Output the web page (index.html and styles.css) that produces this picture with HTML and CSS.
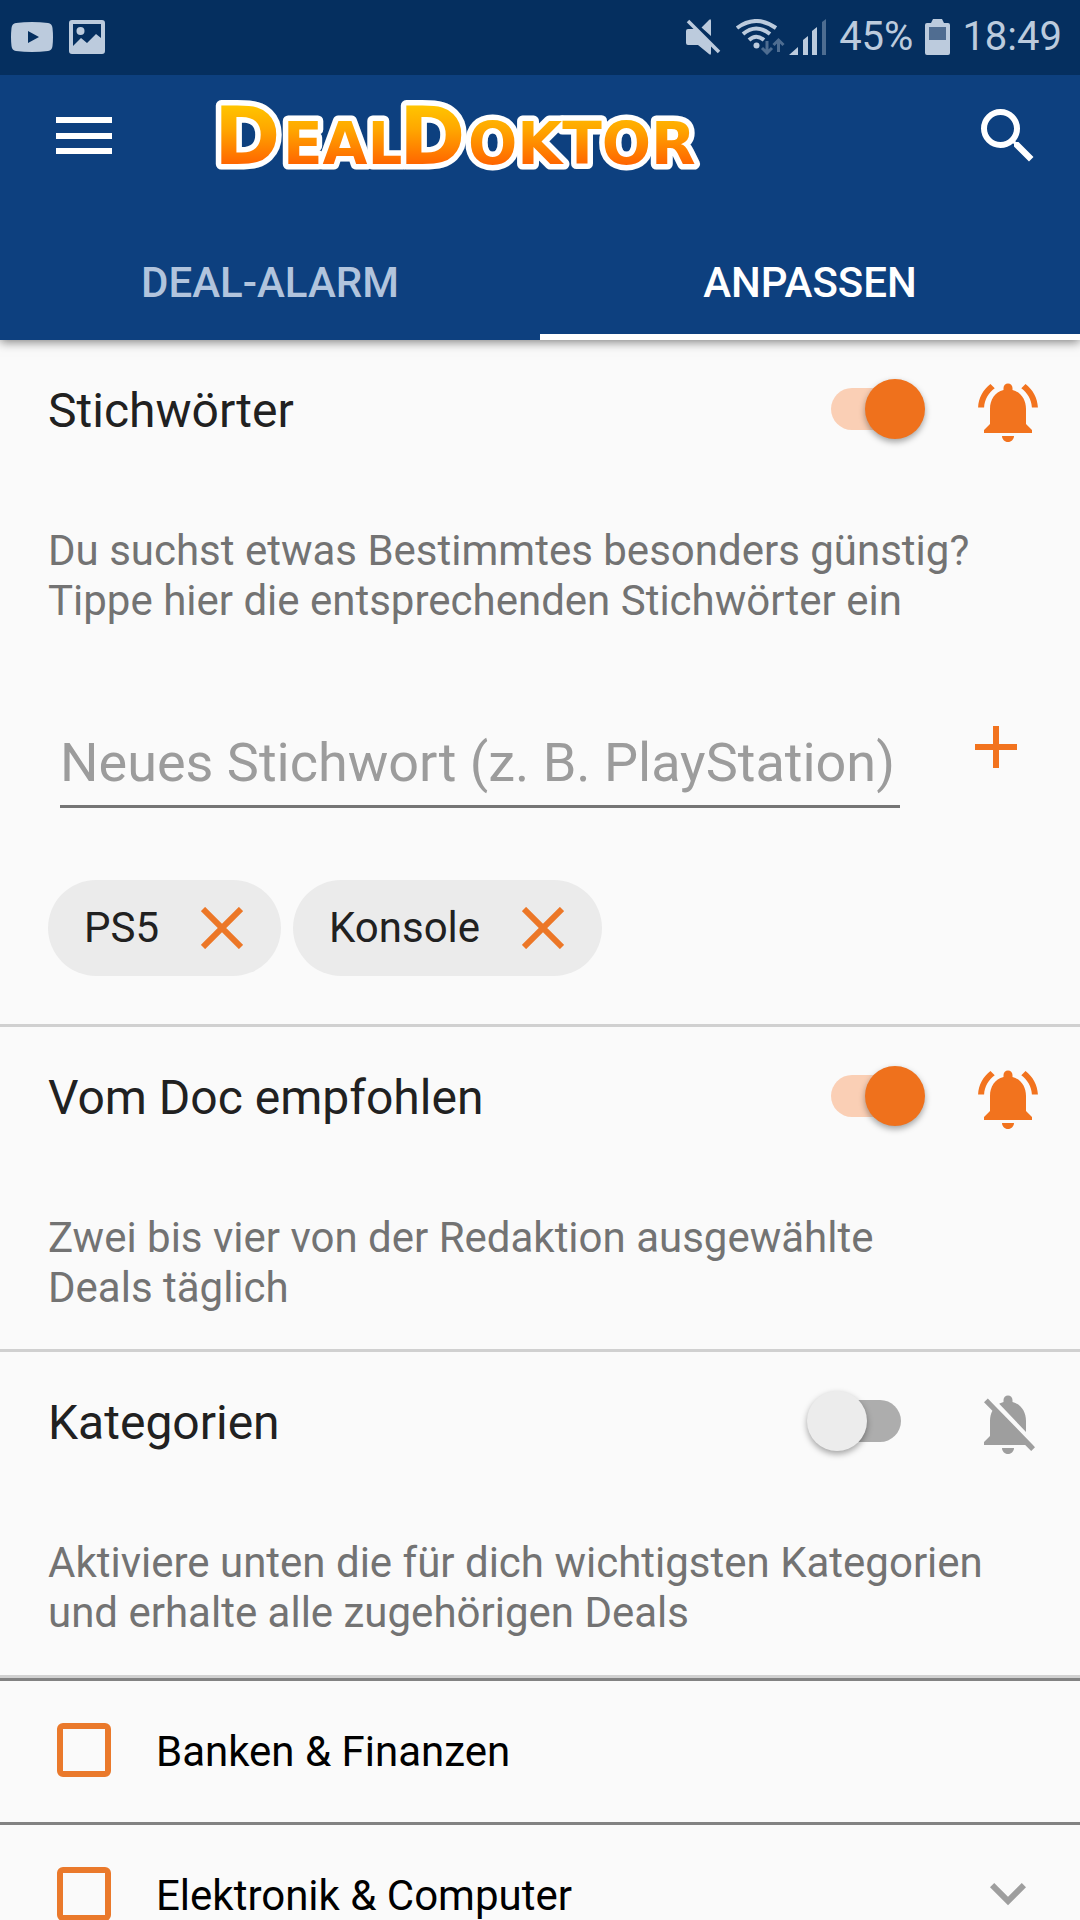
FILE: index.html
```html
<!DOCTYPE html>
<html lang="de">
<head>
<meta charset="utf-8">
<meta name="viewport" content="width=device-width, initial-scale=1">
<title>DealDoktor – Deal-Alarm anpassen</title>
<link rel="stylesheet" href="styles.css">
</head>
<body>
<div class="app">
  <div class="status">
    <div class="status-group status-left">
      <svg width="42" height="30" viewBox="0 0 42 30" aria-hidden="true"><path fill="currentColor" fill-rule="evenodd" d="M5 1Q21-1 37 1Q41 1.500 41.500 6Q42.500 15 41.500 24Q41 28.500 37 29Q21 31 5 29Q1 28.500 .5 24Q-.5 15 .5 6Q1 1.500 5 1ZM17 9v12l11-6z"/></svg>
      <svg width="36" height="34" viewBox="0 0 36 34" aria-hidden="true"><path fill="currentColor" fill-rule="evenodd" d="M3 0h30q3 0 3 3v28q0 3-3 3H3q-3 0-3-3V3q0-3 3-3ZM4 4v22l8-8 6 5 9-9 5 4V4z"/><circle cx="11.500" cy="11" r="4" fill="currentColor"/></svg>
    </div>
    <div class="status-group">
      <svg width="37" height="36" viewBox="0 0 37 36" aria-hidden="true"><path fill="currentColor" d="M2 10h7l16 16v8q0 3-2 1L12 26H2q-2 0-2-2V12q0-2 2-2zM25 2v15L15.500 8.500 23 1q2-2 2 1z"/><path stroke="currentColor" stroke-width="3.500" d="M2 2l31 31"/></svg>
      <svg width="92" height="36" viewBox="0 0 92 36" aria-hidden="true">
        <g fill="none" stroke="currentColor" stroke-width="4"><path d="M2 9Q21-5 41 9"/><path d="M8 15Q21 4 35 15"/><path d="M14 21Q21 14.500 29 21"/></g>
        <circle cx="21.500" cy="26.500" r="3" fill="currentColor"/>
        <g fill="none" stroke="currentColor" stroke-width="3" opacity=".4"><path d="M32 22v12M27 29l5 5 5-5M43.500 33V21M38.500 26l5-5 5 5"/></g>
        <path fill="currentColor" d="M54 36l9-8v8zM68 36V21l5-4v19zM77 36V12l5-4v28z"/><path fill="currentColor" opacity=".4" d="M87 36V3l4-3v36z"/>
      </svg>
      <span>45%</span>
      <svg width="25" height="36" viewBox="0 0 25 36" aria-hidden="true"><path fill="currentColor" d="M8 0h9l2 4h4q2 0 2 2v28q0 2-2 2H2q-2 0-2-2V6q0-2 2-2h4z"/><path fill="#506d91" d="M4 8h17v13H4z"/></svg>
      <time datetime="18:49">18:49</time>
    </div>
  </div>

  <header class="header">
    <div class="toolbar">
      <button class="icon-button" type="button" aria-label="Menü"><svg width="72" height="72" viewBox="0 0 72 72"><path fill="currentColor" d="M8 17h56v6H8zM8 33h56v6H8zM8 48h56v6H8z"/></svg></button>
      <svg class="logo" width="510" height="120" viewBox="210 76 510 120" role="img" aria-label="DealDoktor">
        <defs><linearGradient id="fire" gradientUnits="userSpaceOnUse" x1="0" y1="106" x2="0" y2="164"><stop offset="0" stop-color="#ffc400"/><stop offset=".4" stop-color="#ffa700"/><stop offset="1" stop-color="#ff6600"/></linearGradient></defs>
        <text class="logo-text" y="164"><tspan class="logo-cap" x="214">D</tspan><tspan x="283">EAL</tspan><tspan class="logo-cap" x="399">D</tspan><tspan x="468">OKTOR</tspan></text>
      </svg>
      <button class="icon-button" type="button" aria-label="Suche"><svg width="72" height="72" viewBox="0 0 24 24"><path fill="currentColor" d="M15.500 14h-.79l-.28-.27A6.471 6.471 0 0 0 16 9.500 6.500 6.500 0 1 0 9.500 16c1.610 0 3.090-.59 4.230-1.570l.27.28v.79l5 4.990L20.490 19l-4.990-5zm-6 0C7.010 14 5 11.990 5 9.500S7.010 5 9.500 5 14 7.010 14 9.500 11.990 14 9.500 14z"/></svg></button>
    </div>
    <div class="tabs" role="tablist">
      <button class="tab" type="button" role="tab" aria-selected="false">DEAL-ALARM</button>
      <button class="tab" type="button" role="tab" aria-selected="true">ANPASSEN</button>
    </div>
  </header>

  <main class="content">
    <section class="section">
      <div class="section-head">
        <h2><label for="sw-keywords">Stichwörter</label></h2>
        <input class="switch" type="checkbox" id="sw-keywords" checked>
        <button class="icon-button bell bell-on" type="button" aria-label="Benachrichtigung aus"><svg width="72" height="72" viewBox="0 0 24 24"><path fill="currentColor" d="M7.580 4.080L6.150 2.650C3.750 4.480 2.170 7.300 2.030 10.500h2c.15-2.650 1.510-4.970 3.550-6.420zm12.390 6.420h2c-.15-3.200-1.730-6.020-4.120-7.850l-1.420 1.430c2.020 1.450 3.390 3.770 3.540 6.420zM18 11c0-3.070-1.640-5.640-4.500-6.320V4c0-.83-.67-1.500-1.500-1.500s-1.500.67-1.500 1.500v.68C7.630 5.360 6 7.920 6 11v5l-2 2v1h16v-1l-2-2zM12 22c1.100 0 2-.9 2-2h-4c0 1.100.9 2 2 2z"/></svg></button>
      </div>
      <p class="description">Du suchst etwas Bestimmtes besonders günstig?<br>Tippe hier die entsprechenden Stichwörter ein</p>
      <form class="keyword-form">
        <input class="keyword-input" type="text" aria-label="Neues Stichwort" placeholder="Neues Stichwort (z. B. PlayStation)">
        <button class="icon-button bell-on" type="button" aria-label="Hinzufügen"><svg width="72" height="72" viewBox="0 0 24 24"><path fill="currentColor" d="M19 13h-6v6h-2v-6H5v-2h6V5h2v6h6z"/></svg></button>
      </form>
      <ul class="chips">
        <li class="chip">PS5<button class="chip-remove" type="button" aria-label="PS5 entfernen"><svg width="42" height="42" viewBox="0 0 42 42"><path stroke="currentColor" stroke-width="6" d="M2 2l38 38M40 2L2 40"/></svg></button></li>
        <li class="chip">Konsole<button class="chip-remove" type="button" aria-label="Konsole entfernen"><svg width="42" height="42" viewBox="0 0 42 42"><path stroke="currentColor" stroke-width="6" d="M2 2l38 38M40 2L2 40"/></svg></button></li>
      </ul>
    </section>

    <section class="section">
      <div class="section-head">
        <h2><label for="sw-doc">Vom Doc empfohlen</label></h2>
        <input class="switch" type="checkbox" id="sw-doc" checked>
        <button class="icon-button bell bell-on" type="button" aria-label="Benachrichtigung aus"><svg width="72" height="72" viewBox="0 0 24 24"><path fill="currentColor" d="M7.580 4.080L6.150 2.650C3.750 4.480 2.170 7.300 2.030 10.500h2c.15-2.650 1.510-4.970 3.550-6.420zm12.390 6.420h2c-.15-3.200-1.730-6.020-4.120-7.850l-1.420 1.430c2.020 1.450 3.390 3.770 3.540 6.420zM18 11c0-3.070-1.640-5.640-4.500-6.320V4c0-.83-.67-1.500-1.500-1.500s-1.500.67-1.500 1.500v.68C7.630 5.360 6 7.920 6 11v5l-2 2v1h16v-1l-2-2zM12 22c1.100 0 2-.9 2-2h-4c0 1.100.9 2 2 2z"/></svg></button>
      </div>
      <p class="description">Zwei bis vier von der Redaktion ausgewählte<br>Deals täglich</p>
    </section>

    <section class="section">
      <div class="section-head">
        <h2><label for="sw-categories">Kategorien</label></h2>
        <input class="switch" type="checkbox" id="sw-categories">
        <button class="icon-button bell bell-off" type="button" aria-label="Benachrichtigung an"><svg width="72" height="72" viewBox="0 0 24 24"><path fill="currentColor" d="M20 18.690L7.840 6.140 5.270 3.490 4 4.760l2.800 2.800v.01c-.52.99-.8 2.160-.8 3.420v5l-2 2v1h13.730l2 2L21 19.720l-1-1.030zM12 22c1.110 0 2-.89 2-2h-4c0 1.110.89 2 2 2zm6-7.320V11c0-3.080-1.640-5.640-4.500-6.320V4c0-.83-.67-1.500-1.500-1.500s-1.500.67-1.500 1.500v.68c-.15.03-.29.08-.42.12-.1.03-.2.07-.3.11h-.01c-.01 0-.01 0-.02.01-.23.09-.46.2-.68.31 0 0-.01 0-.01.01L18 14.680z"/></svg></button>
      </div>
      <p class="description">Aktiviere unten die für dich wichtigsten Kategorien<br>und erhalte alle zugehörigen Deals</p>
    </section>

    <ul class="categories">
      <li class="category">
        <input class="check" type="checkbox" id="cat-finance">
        <label for="cat-finance">Banken &amp; Finanzen</label>
      </li>
      <li class="category">
        <input class="check" type="checkbox" id="cat-tech">
        <label for="cat-tech">Elektronik &amp; Computer</label>
        <button class="icon-button bell-off" type="button" aria-label="Aufklappen"><svg width="72" height="72" viewBox="0 0 24 24"><path fill="currentColor" d="M7.410 8.340L12 12.920l4.590-4.580L18 9.750l-6 6-6-6z"/></svg></button>
      </li>
    </ul>
  </main>
</div>
</body>
</html>
```
FILE: styles.css
```css
* {
  box-sizing: border-box;
}

body {
  margin: 0;
  background: #fafafa;
  color: #212121;
  font-family: Roboto, "Noto Sans", sans-serif;
  font-size: 42px;
  line-height: 50px;
}

h2,
p,
ul {
  margin: 0;
  padding: 0;
}

ul {
  list-style: none;
}

svg {
  display: block;
  flex: none;
}

button {
  padding: 0;
  border: 0;
  background: none;
  color: inherit;
  font: inherit;
}

.app {
  display: flex;
  flex-direction: column;
  height: 100vh;
}

/* Status bar */
.status {
  position: relative;
  z-index: 1;
  display: flex;
  flex: none;
  align-items: center;
  justify-content: space-between;
  height: 75px;
  padding: 0 18px 2px 11px;
  background: #052f5f;
  color: #bccbdd;
  font-size: 40px;
}

.status-group {
  display: flex;
  align-items: center;
  gap: 12px;
}

.status-left {
  gap: 16px;
}

/* Header */
.header {
  position: relative;
  flex: none;
  background: #0d407f;
  box-shadow: 0 2px 10px rgba(0, 0, 0, 0.5);
  color: #fff;
}

.toolbar {
  display: flex;
  align-items: center;
  height: 122px;
  padding: 0 36px 0 48px;
}

.icon-button {
  flex: none;
  width: 72px;
  height: 72px;
}

.logo {
  margin: 0 auto 0 90px;
}

.logo-text {
  fill: url(#fire);
  stroke: #fff;
  stroke-width: 11px;
  stroke-linejoin: round;
  paint-order: stroke;
  font-family: "DejaVu Sans", sans-serif;
  font-size: 58px;
  font-weight: 700;
}

.logo-cap {
  font-size: 80px;
}

.tabs {
  display: flex;
  padding-top: 28px;
}

.tab {
  flex: 1;
  height: 115px;
  padding-top: 6px;
  border-bottom: 6px solid transparent;
  color: #b1c4dd;
  font-weight: 500;
}

.tab[aria-selected="true"] {
  border-color: #fff;
  color: #fff;
}

/* Sections */
.content {
  flex: 1;
  min-height: 0;
  overflow-y: auto;
  scrollbar-width: none;
}

.section {
  padding-bottom: 36px;
  border-bottom: 3px solid #d0d0d0;
}

.section:first-child {
  padding-bottom: 48px;
}

.section:nth-child(3) {
  padding-bottom: 37px;
}

.section-head {
  display: flex;
  align-items: center;
  height: 137px;
  padding: 0 36px 0 48px;
}

h2 {
  flex: 1;
  padding-top: 4px;
  font-size: 48px;
  font-weight: 400;
  line-height: 56px;
}

.switch {
  position: relative;
  flex: none;
  width: 118px;
  height: 60px;
  margin: 0 47px 0 0;
  appearance: none;
}

.switch::before {
  position: absolute;
  inset: 9px 24px;
  border-radius: 21px;
  background: #adadad;
  content: "";
}

.switch::after {
  position: absolute;
  top: 0;
  left: 0;
  width: 60px;
  height: 60px;
  border-radius: 50%;
  background: #ececec;
  box-shadow: 0 3px 6px rgba(0, 0, 0, 0.35);
  content: "";
}

.switch:checked::before {
  background: #facfb5;
}

.switch:checked::after {
  right: 0;
  left: auto;
  background: #ef711c;
}

.bell {
  margin-top: 6px;
}

.bell-on {
  color: #f2731e;
}

.bell-off {
  color: #9e9e9e;
}

.description {
  padding: 49px 48px 0;
  color: #737373;
}

/* Keyword entry */
.keyword-form {
  display: flex;
  gap: 60px;
  align-items: flex-start;
  padding: 85px 48px 0 60px;
}

.keyword-input {
  flex: 1;
  min-width: 0;
  height: 97px;
  padding: 19px 0 11px;
  border: 0;
  border-bottom: 3px solid #757575;
  background: none;
  color: #212121;
  font: 54px/64px Roboto, "Noto Sans", sans-serif;
}

.keyword-input::placeholder {
  color: #9c9c9c;
  opacity: 1;
}

.chips {
  display: flex;
  flex-wrap: wrap;
  gap: 12px;
  padding: 72px 48px 0;
}

.chip {
  display: flex;
  gap: 42px;
  align-items: center;
  height: 96px;
  padding: 0 38px 0 36px;
  border-radius: 48px;
  background: #ebebeb;
}

.chip-remove {
  color: #ec7727;
}

/* Categories */
.category {
  display: flex;
  align-items: center;
  height: 144px;
  padding: 0 36px 3px 57px;
  border-top: 3px solid #828282;
  color: #000;
}

.category label {
  flex: 1;
  padding: 4px 0 0 45px;
}

.check {
  flex: none;
  width: 54px;
  height: 54px;
  margin: 0;
  border: 6px solid #ea792b;
  border-radius: 6px;
  appearance: none;
}
```
